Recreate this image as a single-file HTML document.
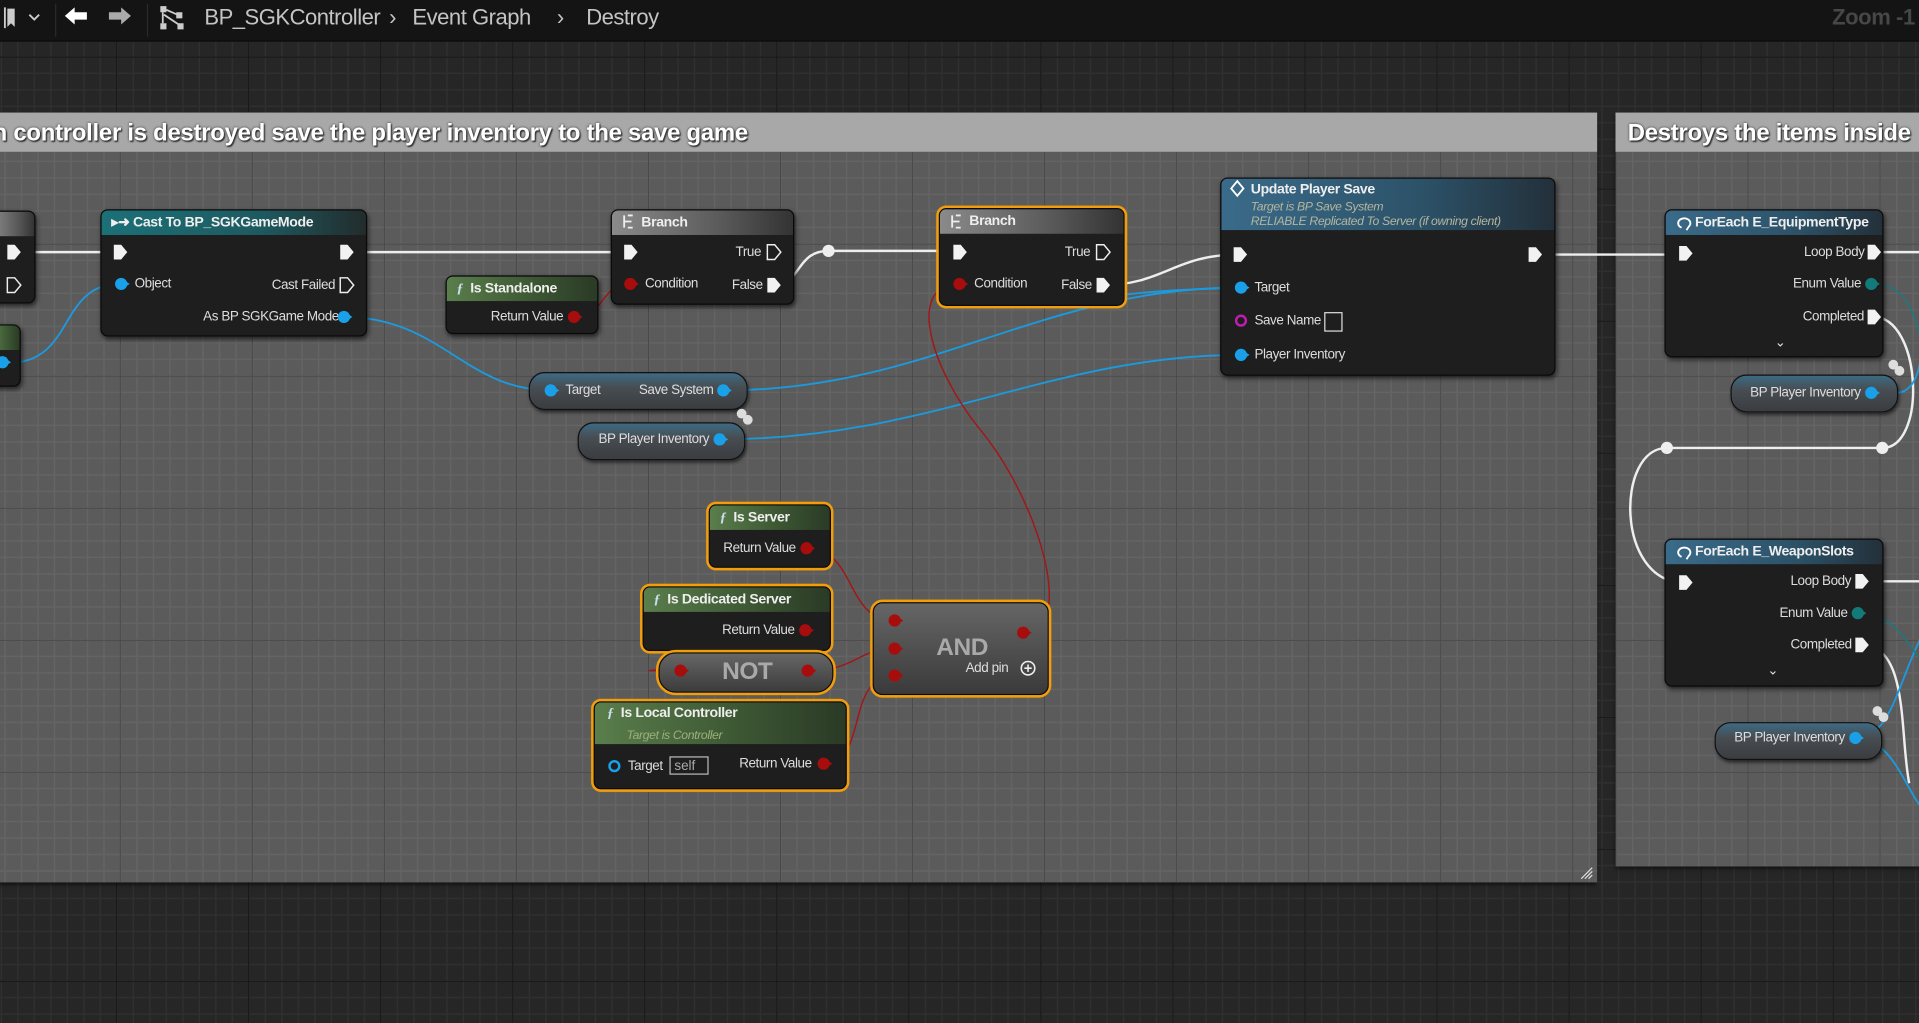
<!DOCTYPE html>
<html><head><meta charset="utf-8"><style>
html,body{margin:0;padding:0;width:1919px;height:1023px;overflow:hidden;background:#262626;font-family:"Liberation Sans",sans-serif}
#w{position:absolute;left:0;top:0;width:1568px;height:836px;transform:scale(1.22385);transform-origin:0 0;overflow:hidden;
background-color:#262626;
background-image:linear-gradient(90deg,#161616 1px,transparent 1px),linear-gradient(0deg,#161616 1px,transparent 1px),linear-gradient(90deg,#2f2f2f 1px,transparent 1px),linear-gradient(0deg,#2f2f2f 1px,transparent 1px);
background-size:107.9px 107.9px,107.9px 107.9px,13.49px 13.49px,13.49px 13.49px;
background-position:-13px 47px,-13px 47px,-13px 47px,-13px 47px}
.top{position:absolute;left:0;top:0;width:1568px;height:33px;background:#141414;border-bottom:1px solid #0c0c0c}
.t{position:absolute;white-space:nowrap;color:#ddd;font-size:11px;line-height:13px;letter-spacing:-0.35px}
.cm{position:absolute;background-color:#5b5b5b;
background-image:linear-gradient(90deg,#484848 1px,transparent 1px),linear-gradient(0deg,#484848 1px,transparent 1px),linear-gradient(90deg,#646464 1px,transparent 1px),linear-gradient(0deg,#646464 1px,transparent 1px);
background-size:107.9px 107.9px,107.9px 107.9px,13.49px 13.49px,13.49px 13.49px;box-shadow:0 2px 3px rgba(0,0,0,.5)}
.ch{position:absolute;left:0;top:0;right:0;height:32px;background:#a8a8a8;color:#fff;font-weight:bold;font-size:19.5px;line-height:34px;letter-spacing:-0.2px;text-shadow:1px 1px 1px #333,0 0 2px #333;white-space:nowrap;overflow:hidden}
.n{position:absolute;background:#1d1e1d;border:1px solid #0a0a0a;border-radius:6px;box-shadow:1px 2px 4px rgba(0,0,0,.6);overflow:hidden}
.sel{outline:2px solid #f29e0c;outline-offset:0;box-shadow:0 0 3px #f29e0c}
.h{position:absolute;left:0;top:0;right:0;height:20px;color:#eee;font-size:11.5px;line-height:20px;padding-left:8px;font-weight:bold;white-space:nowrap;letter-spacing:-0.3px}
.hg{background:linear-gradient(90deg,#5a7e4c,#3b5532 60%,#2a3a26)}
.hb{background:linear-gradient(90deg,#3a6b8a,#2c5268 60%,#23303a)}
.ht{background:linear-gradient(90deg,#1c7078,#1d5a60 60%,#222c2c)}
.hy{background:linear-gradient(90deg,#8a8a8a,#5a5a5a 60%,#333)}
.pill{position:absolute;border-radius:13px;background:linear-gradient(180deg,#3d6a84 0,#474d52 40%,#3a3d40);border:1px solid #111;box-shadow:1px 2px 3px rgba(0,0,0,.6)}
.it{font-style:italic;color:#b5b5a0;font-weight:normal;font-size:10px}
</style></head><body><div id="w">

<div class="top"></div>
<div style="position:absolute;left:45px;top:3px;width:1px;height:27px;background:#2a2a2a"></div>
<div style="position:absolute;left:120px;top:3px;width:1px;height:27px;background:#2a2a2a"></div>
<div class="t" style="left:167px;top:4px;font-size:18px;line-height:20px;color:#c4c4c4;letter-spacing:-0.4px">BP_SGKController</div>
<div class="t" style="left:318px;top:4px;font-size:18px;line-height:20px;color:#c4c4c4">›</div>
<div class="t" style="left:337px;top:4px;font-size:18px;line-height:20px;color:#c4c4c4;letter-spacing:-0.4px">Event Graph</div>
<div class="t" style="left:455px;top:4px;font-size:18px;line-height:20px;color:#c4c4c4">›</div>
<div class="t" style="left:479px;top:4px;font-size:18px;line-height:20px;color:#c4c4c4;letter-spacing:-0.4px">Destroy</div>
<div class="t" style="left:1497px;top:4px;font-size:18px;line-height:20px;color:#474747;font-weight:bold">Zoom -1</div>
<svg style="position:absolute;left:0;top:0" width="160" height="33">
<path d="M6 7h6v15l-3-3-3 3z" fill="#ccc"/><path d="M4 6v17" stroke="#ccc" stroke-width="1.5"/>
<path d="M24 12l4 4 4-4" stroke="#ccc" fill="none" stroke-width="1.5"/>
<path d="M53 13l8-7v4h10v6H61v4z" fill="#fff"/>
<path d="M107 13l-8-7v4H89v6h10v4z" fill="#aaa"/>
<rect x="131" y="5" width="5" height="5" fill="#ccc"/><rect x="144" y="10" width="5" height="5" fill="#ccc"/><rect x="131" y="19" width="5" height="5" fill="#ccc"/><rect x="145" y="19" width="5" height="5" fill="#ccc"/><path d="M133 10v9M136 8l9 4M134 12l12 8" stroke="#ccc" stroke-width="1.5"/>
</svg>

<div class="cm" style="left:-10px;top:92px;width:1315px;height:629px"><div class="ch" style="padding-left:4px">n controller is destroyed save the player inventory to the save game</div></div>
<div class="cm" style="left:1320px;top:92px;width:260px;height:616px"><div class="ch" style="padding-left:10px">Destroys the items inside</div></div>
<svg style="position:absolute;left:1290px;top:707px" width="12" height="12"><path d="M2 11L11 2M5 11l6-6M8 11l3-3" stroke="#ddd" stroke-width="1"/></svg>

<svg style="position:absolute;left:0;top:0" width="1568" height="836" fill="none">
<g stroke="#eee" stroke-width="2">
<path d="M11 206H97"/><path d="M283 206H514"/>
<path d="M632 233C655 233 650 205 677 205H783"/>
<path d="M901 233C950 233 960 208 1012 208"/>
<path d="M1253 208H1376"/><path d="M1531 206H1568"/>
<path d="M1531 259C1570 259 1575 366 1538 366H1362C1320 366 1320 476 1376 476"/>
<path d="M1521 475H1568"/><path d="M1521 527C1560 527 1552 600 1560 640"/>
</g>
<g stroke="#1a9be0" stroke-width="1.5">
<path d="M15 296C60 290 50 232 98 232"/>
<path d="M281 259C360 259 380 319 450 319"/>
<path d="M591 319C760 319 850 235 1014 235"/>
<path d="M588 359C760 359 860 290 1014 290"/>
<path d="M880 250C900 240 950 237 1014 235" stroke="#1a9be0"/>
<path d="M1549 321C1565 321 1570 300 1570 280"/>
<path d="M1516 603C1545 603 1550 560 1570 520M1516 603C1545 603 1555 640 1570 660"/>
</g>
<path d="M1529 232C1560 232 1565 260 1570 280M1518 501C1545 501 1555 520 1570 540" stroke="#1a7a80" stroke-width="1.2"/>
<g stroke="#a01818" stroke-width="1.2">
<path d="M469 259C495 259 490 232 515 232"/>
<path d="M784 232C740 232 760 300 800 350C850 410 880 517 836 517"/>
<path d="M659 448C700 448 690 507 731 507"/>
<path d="M658 515C700 515 600 540 530 548C530 548 540 548 556 548"/>
<path d="M660 548C700 548 700 530 731 530"/>
<path d="M673 624C710 624 690 552 731 552"/>
</g>
</svg>

<div class="n" style="left:-8px;top:172px;width:35px;height:74px"><div class="h hy"></div></div>
<div class="n" style="left:-8px;top:265px;width:23px;height:49px"><div class="h hg"></div></div>

<div class="n" style="left:82px;top:171px;width:216px;height:102px"><div class="h ht">▸➜ Cast To BP_SGKGameMode</div></div>
<div class="t" style="left:110px;top:226px">Object</div>
<div class="t" style="left:222px;top:227px">Cast Failed</div>
<div class="t" style="left:166px;top:253px">As BP SGKGame Mode</div>

<div class="n" style="left:364px;top:225px;width:123px;height:46px"><div class="h hg"><i style="font-family:'Liberation Serif',serif;color:#cde">ƒ</i>&nbsp; Is Standalone</div></div>
<div class="t" style="left:401px;top:253px">Return Value</div>

<div class="n" style="left:499px;top:171px;width:148px;height:76px"><div class="h hy" style="padding-left:24px">Branch</div></div>
<div class="t" style="left:601px;top:200px">True</div>
<div class="t" style="left:527px;top:226px">Condition</div>
<div class="t" style="left:598px;top:227px">False</div>

<div class="n sel" style="left:767px;top:170px;width:150px;height:78px"><div class="h hy" style="padding-left:24px">Branch</div></div>
<div class="t" style="left:870px;top:200px">True</div>
<div class="t" style="left:796px;top:226px">Condition</div>
<div class="t" style="left:867px;top:227px">False</div>

<div class="n" style="left:997px;top:145px;width:272px;height:160px"><div class="h hb" style="height:42px;padding-left:24px;line-height:18px">Update Player Save<br><span class="it" style="line-height:12px;display:block">Target is BP Save System<br>RELIABLE Replicated To Server (if owning client)</span></div></div>
<div class="t" style="left:1025px;top:229px">Target</div>
<div class="t" style="left:1025px;top:256px">Save Name</div>
<div style="position:absolute;left:1082px;top:255px;width:13px;height:14px;border:1px solid #ddd"></div>
<div class="t" style="left:1025px;top:284px">Player Inventory</div>

<div class="pill" style="left:432px;top:304px;width:177px;height:29px"></div>
<div class="t" style="left:462px;top:313px">Target</div>
<div class="t" style="left:522px;top:313px">Save System</div>
<div class="pill" style="left:472px;top:345px;width:135px;height:29px"></div>
<div class="t" style="left:489px;top:353px">BP Player Inventory</div>

<div class="n sel" style="left:579px;top:412px;width:98px;height:50px"><div class="h hg"><i style="font-family:'Liberation Serif',serif;color:#cde">ƒ</i>&nbsp; Is Server</div></div>
<div class="t" style="left:591px;top:442px">Return Value</div>
<div class="n sel" style="left:525px;top:479px;width:152px;height:51px"><div class="h hg"><i style="font-family:'Liberation Serif',serif;color:#cde">ƒ</i>&nbsp; Is Dedicated Server</div></div>
<div class="t" style="left:590px;top:509px">Return Value</div>
<div class="n sel" style="left:538px;top:533px;width:141px;height:31px;border-radius:14px;background:linear-gradient(#666,#3c3c3c)"></div>
<div class="t" style="left:590px;top:538px;font-size:20px;line-height:22px;font-weight:bold;color:#a9a9a9">NOT</div>
<div class="n sel" style="left:485px;top:573px;width:205px;height:70px"><div class="h hg" style="height:34px;line-height:18px;padding-left:10px"><i style="font-family:'Liberation Serif',serif;color:#cde">ƒ</i>&nbsp; Is Local Controller<br><span class="it" style="padding-left:16px;color:#9cb07c">Target is Controller</span></div></div>
<div class="t" style="left:513px;top:620px">Target</div>
<div style="position:absolute;left:547px;top:618px;width:32px;height:15px;border:1px solid #bbb;color:#aaa;font-size:11px;line-height:15px;padding-left:3px;box-sizing:border-box">self</div>
<div class="t" style="left:604px;top:618px">Return Value</div>

<div class="n sel" style="left:713px;top:492px;width:142px;height:74px;border-radius:8px;background:linear-gradient(#666,#3a3a3a)"></div>
<div class="t" style="left:765px;top:518px;font-size:20px;line-height:22px;font-weight:bold;color:#a9a9a9">AND</div>
<div class="t" style="left:789px;top:540px">Add pin</div>

<div class="n" style="left:1360px;top:171px;width:177px;height:119px"><div class="h hb" style="padding-left:24px">ForEach E_EquipmentType</div></div>
<div class="t" style="left:1474px;top:200px">Loop Body</div>
<div class="t" style="left:1465px;top:226px">Enum Value</div>
<div class="t" style="left:1473px;top:253px">Completed</div>
<div class="t" style="left:1450px;top:274px">⌄</div>
<div class="pill" style="left:1414px;top:306px;width:135px;height:29px"></div>
<div class="t" style="left:1430px;top:315px">BP Player Inventory</div>

<div class="n" style="left:1360px;top:440px;width:177px;height:119px"><div class="h hb" style="padding-left:24px">ForEach E_WeaponSlots</div></div>
<div class="t" style="left:1463px;top:469px">Loop Body</div>
<div class="t" style="left:1454px;top:495px">Enum Value</div>
<div class="t" style="left:1463px;top:521px">Completed</div>
<div class="t" style="left:1444px;top:542px">⌄</div>
<div class="pill" style="left:1401px;top:590px;width:135px;height:29px"></div>
<div class="t" style="left:1417px;top:597px">BP Player Inventory</div>

<svg style="position:absolute;left:0;top:0" width="1568" height="836">
<defs>
<path id="ex" d="M-5-6h6l5 6-5 6h-6z"/>
<g id="bp"><circle r="5" fill="#1aa0e8"/><path d="M4-2l3 2-3 2z" fill="#1aa0e8"/></g>
<g id="rp"><circle r="5" fill="#a80d0d"/><path d="M4-2l3 2-3 2z" fill="#a80d0d"/></g>
<g id="tp"><circle r="5" fill="#137a7a"/><path d="M4-2l3 2-3 2z" fill="#137a7a"/></g>
</defs>
<g fill="#f2f2f2">
<use href="#ex" x="11" y="206"/><use href="#ex" x="98" y="206"/><use href="#ex" x="283" y="206"/>
<use href="#ex" x="515" y="206"/><use href="#ex" x="632" y="233"/>
<use href="#ex" x="784" y="206"/><use href="#ex" x="901" y="233"/>
<use href="#ex" x="1013" y="208"/><use href="#ex" x="1254" y="208"/>
<use href="#ex" x="1377" y="207"/><use href="#ex" x="1531" y="206"/><use href="#ex" x="1531" y="259"/>
<use href="#ex" x="1377" y="476"/><use href="#ex" x="1521" y="475"/><use href="#ex" x="1521" y="527"/>
</g>
<g fill="none" stroke="#eee" stroke-width="1.2">
<use href="#ex" x="11" y="233"/><use href="#ex" x="283" y="233"/><use href="#ex" x="632" y="206"/><use href="#ex" x="901" y="206"/>
</g>
<circle cx="677" cy="205" r="5" fill="#eee"/><circle cx="1362" cy="366" r="5" fill="#eee"/><circle cx="1538" cy="366" r="5" fill="#eee"/>
<g fill="#ddd"><circle cx="606" cy="338" r="4"/><circle cx="611" cy="343" r="4"/><circle cx="1547" cy="298" r="4"/><circle cx="1552" cy="303" r="4"/><circle cx="1534" cy="581" r="4"/><circle cx="1539" cy="586" r="4"/></g>
<use href="#bp" x="99" y="232"/><use href="#bp" x="281" y="259"/><use href="#bp" x="450" y="319"/><use href="#bp" x="591" y="319"/>
<use href="#bp" x="588" y="359"/><use href="#bp" x="1014" y="235"/><use href="#bp" x="1014" y="290"/><use href="#bp" x="1529" y="321"/><use href="#bp" x="1516" y="603"/><use href="#bp" x="2" y="296"/>
<use href="#tp" x="1529" y="232"/><use href="#tp" x="1518" y="501"/>
<use href="#rp" x="469" y="259"/><use href="#rp" x="515" y="232"/><use href="#rp" x="784" y="232"/>
<use href="#rp" x="659" y="448"/><use href="#rp" x="658" y="515"/><use href="#rp" x="556" y="548"/><use href="#rp" x="660" y="548"/><use href="#rp" x="673" y="624"/>
<use href="#rp" x="731" y="507"/><use href="#rp" x="731" y="530"/><use href="#rp" x="731" y="552"/><use href="#rp" x="836" y="517"/>
<circle cx="1014" cy="262" r="4" fill="none" stroke="#c21cb0" stroke-width="2"/>
<circle cx="502" cy="626" r="4" fill="none" stroke="#1aa0e8" stroke-width="2"/>
<circle cx="840" cy="546" r="5.5" fill="none" stroke="#eee" stroke-width="1.3"/><path d="M837 546h6M840 543v6" stroke="#eee" stroke-width="1.3"/>
<path d="M1011 148l-5 6 5 6 5-6z" fill="none" stroke="#fff" stroke-width="1.5"/>
<path d="M510 176v10M510 181h6M513 176h4M513 186h4" stroke="#eee" stroke-width="1.5"/>
<path d="M778 176v10M778 181h6M781 176h4M781 186h4" stroke="#eee" stroke-width="1.5"/>
<path d="M1374 186a5 4 0 1 1 6 -1l-2 3" fill="none" stroke="#fff" stroke-width="1.5"/>
<path d="M1374 455a5 4 0 1 1 6 -1l-2 3" fill="none" stroke="#fff" stroke-width="1.5"/>
</svg>
</div></body></html>
